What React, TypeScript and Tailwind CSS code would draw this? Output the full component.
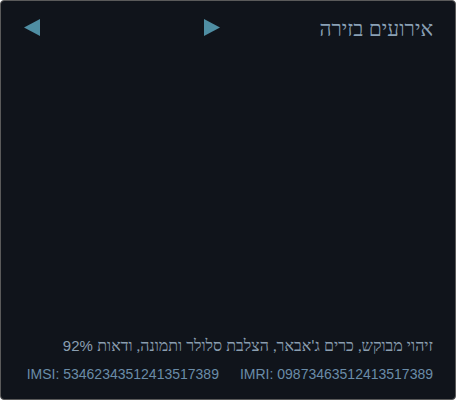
import React from 'react';

const Triangle: React.FC<{ dir: 'left' | 'right' }> = ({ dir }) => (
  <svg width="16" height="17" viewBox="0 0 16 17" className="block">
    {dir === 'left' ? (
      <polygon points="16,0 16,17 0,8.5" fill="#4f8ea3" />
    ) : (
      <polygon points="0,0 0,17 16,8.5" fill="#4f8ea3" />
    )}
  </svg>
);

const latin = { fontFamily: '"Liberation Sans", Arial, sans-serif' };
const hebrew = { fontFamily: 'Lato, "DejaVu Sans Mono", monospace' };

const App: React.FC = () => {
  return (
    <div
      dir="rtl"
      className="w-[456px] h-[400px] bg-[#10141b] border border-[#5a5a5a] rounded-[4px] flex flex-col"
      style={latin}
    >
      {/* Header */}
      <div className="flex items-center h-[52px] pr-[22px] pl-[23px]">
        <div className="text-[21px] text-[#8aa1b6] leading-none flex-1" style={hebrew}>
          אירועים בזירה
        </div>
        <div className="flex items-center gap-[164px] pt-[1px]">
          <button className="block">
            <Triangle dir="right" />
          </button>
          <button className="block">
            <Triangle dir="left" />
          </button>
        </div>
      </div>

      <div className="flex-1" />

      {/* Footer */}
      <div className="pr-[22px] pl-[20px] pb-[17px] flex flex-col gap-[11px]">
        <div className="text-[16px] leading-[18px] text-[#8b9fb1] whitespace-nowrap">
          <span style={hebrew}>זיהוי מבוקש, כרים ג'אבאר, הצלבת סלולר ותמונה, ודאות</span>{' '}
          <span className="text-[15px]">92%</span>
        </div>
        <div className="flex gap-[21px] text-[14px] leading-[16px] text-[#6a8ca8] whitespace-nowrap">
          <span dir="ltr" className="whitespace-nowrap">IMRI: 09873463512413517389</span>
          <span dir="ltr" className="whitespace-nowrap">IMSI: 53462343512413517389</span>
        </div>
      </div>
    </div>
  );
};

export default App;
